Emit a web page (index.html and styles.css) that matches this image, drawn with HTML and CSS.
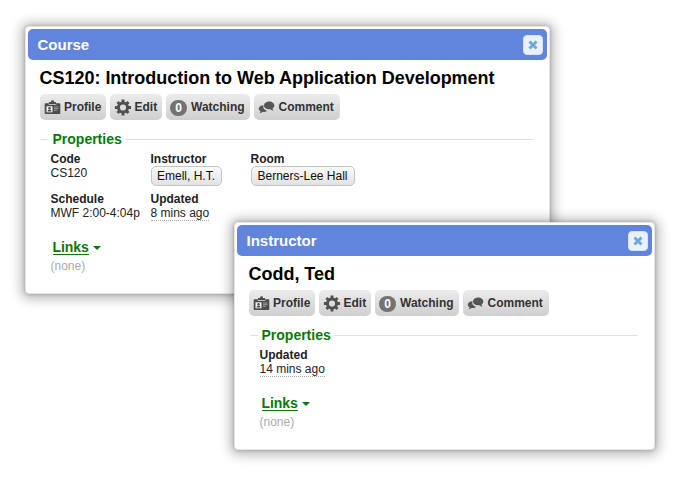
FILE: index.html
```html
<!DOCTYPE html>
<html lang="en">
<head>
<meta charset="utf-8">
<title>Course</title>
<link rel="stylesheet" href="styles.css">
</head>
<body>
<svg class="defs" width="0" height="0" aria-hidden="true">
  <symbol id="badge" viewBox="0 0 16 15">
    <path fill="#4c4c4c" fill-rule="evenodd" d="M1 3.2h3.6V2h2V1.200Q6.700.3 8 .3T9.400 1.200V2h2v1.200H15q.8 0 .8.800v9.200q0 .8-.8.800H1q-.8 0-.8-.8V4q0-.8.8-.8zM4.200 4.200V5h7.600v-.8z"/>
    <path fill="#f4f4f4" d="M2 6.300h6v6H2z"/>
    <circle cx="5" cy="8.200" r="1.200" fill="#4c4c4c"/>
    <path fill="#4c4c4c" d="M3 11.500q0-1.900 2-1.900t2 1.900z"/>
    <path stroke="#b0b0b0" stroke-width=".8" d="M9.400 7h4.600M9.400 8.700h4.600M9.400 10.300h3"/>
  </symbol>
  <symbol id="gear" viewBox="-8 -8 16 16">
    <path stroke="#505050" stroke-width="2.700" d="M0-7.600V-4M0 4v3.600M-7.600 0H-4M4 0h3.600M-5.200-5.200l2.400 2.400M2.800 2.800l2.400 2.400M-5.200 5.200l2.400-2.400M2.800-2.800l2.400-2.400"/>
    <circle r="4.300" fill="none" stroke="#505050" stroke-width="2.800"/>
  </symbol>
  <symbol id="talk" viewBox="0 0 16 13">
    <path fill="#555" d="M5 4.300C2.200 4.500.3 5.900.3 7.700c0 1.100.7 2 1.700 2.600 0 .8-.3 1.400-.9 2 1.200-.1 2.200-.6 2.900-1.300 1.900.2 3.700-.3 4.700-1.300C6 9.200 4.200 7.400 5 4.300z"/>
    <path fill="#555" d="M10.600.6c3 0 5.200 1.700 5.200 3.900 0 1.300-.7 2.300-1.800 3 .1.900.4 1.500 1 2.200-1.400-.1-2.400-.7-3.100-1.500-3.600.3-6.400-1.300-6.400-3.700 0-2.200 2.200-3.900 5.100-3.900z"/>
  </symbol>
  <symbol id="close" viewBox="0 0 10 10">
    <path d="M1.500 1.500l7 7M8.500 1.500L1.500 8.500" stroke="#6eaad8" stroke-width="3"/>
  </symbol>
</svg>

<section class="window course">
  <header class="bar"><span class="kind">Course</span><button class="close" aria-label="Close"><svg><use href="#close"/></svg></button></header>
  <h1 class="title">CS120: Introduction to Web Application Development</h1>
  <nav class="tools">
    <button class="tool profile"><svg class="i-badge"><use href="#badge"/></svg><span>Profile</span></button>
    <button class="tool edit"><svg class="i-gear"><use href="#gear"/></svg><span>Edit</span></button>
    <button class="tool watch"><b class="count">0</b><span>Watching</span></button>
    <button class="tool comment"><svg class="i-talk"><use href="#talk"/></svg><span>Comment</span></button>
  </nav>
  <h2 class="legend"><span>Properties</span></h2>
  <dl class="props">
    <div><dt>Code</dt><dd>CS120</dd></div>
    <div><dt>Instructor</dt><dd><button class="chip emell">Emell, H.T.</button></dd></div>
    <div><dt>Room</dt><dd><button class="chip hall">Berners-Lee Hall</button></dd></div>
    <div><dt>Schedule</dt><dd>MWF 2:00-4:04p</dd></div>
    <div><dt>Updated</dt><dd><span class="time">8 mins ago</span></dd></div>
  </dl>
  <h2 class="links"><span>Links</span><i class="caret"></i></h2>
  <p class="none">(none)</p>
</section>

<section class="window instructor">
  <header class="bar"><span class="kind">Instructor</span><button class="close" aria-label="Close"><svg><use href="#close"/></svg></button></header>
  <h1 class="title">Codd, Ted</h1>
  <nav class="tools">
    <button class="tool profile"><svg class="i-badge"><use href="#badge"/></svg><span>Profile</span></button>
    <button class="tool edit"><svg class="i-gear"><use href="#gear"/></svg><span>Edit</span></button>
    <button class="tool watch"><b class="count">0</b><span>Watching</span></button>
    <button class="tool comment"><svg class="i-talk"><use href="#talk"/></svg><span>Comment</span></button>
  </nav>
  <h2 class="legend"><span>Properties</span></h2>
  <dl class="props">
    <div><dt>Updated</dt><dd><span class="time">14 mins ago</span></dd></div>
  </dl>
  <h2 class="links"><span>Links</span><i class="caret"></i></h2>
  <p class="none">(none)</p>
</section>
</body>
</html>
```
FILE: styles.css
```css
* { box-sizing: border-box; margin: 0; padding: 0; }
body {
  width: 682px;
  height: 486px;
  position: relative;
  overflow: hidden;
  background: #fff;
  color: #222;
  font: 12px "Liberation Sans", Arial, sans-serif;
}
button { font: inherit; color: inherit; border: 0; white-space: nowrap; }
.defs { position: absolute; }

/* floating windows */
.window {
  position: absolute;
  background: #fff;
  border: 1px solid #e6e6e6;
  border-radius: 4px;
  padding: 2px;
  box-shadow: 0 0 3px 1px rgba(0,0,0,.14), 0 1px 12px 4px rgba(0,0,0,.27);
}
.course { left: 25px; top: 26px; width: 525px; height: 268px; }
.instructor { left: 234px; top: 222px; width: 421px; height: 228px; }

.bar {
  height: 31px;
  display: flex;
  align-items: center;
  justify-content: space-between;
  padding: 0 4px 0 9.5px;
  border-radius: 5px;
  background: #6184dc;
  color: #fff;
  font-size: 15px;
  font-weight: bold;
}
.close {
  width: 20px;
  height: 20px;
  border-radius: 4px;
  background: #e8f1fc;
  border: 1px solid #d3e2f8;
  display: flex;
  align-items: center;
  justify-content: center;
}
.close svg { width: 10px; height: 10px; }
.title {
  height: 34px;
  padding-left: 11.5px;
  font-size: 18px;
  line-height: 36px;
  letter-spacing: -.02px;
  color: #000;
  white-space: nowrap;
}
.tools { display: flex; gap: 4px; padding-left: 12px; }
.tool {
  height: 26px;
  display: flex;
  align-items: center;
  padding-left: 4px;
  border-radius: 5px;
  background: linear-gradient(#ececec, #cfcfcf);
  color: #333;
  font-weight: bold;
}
.profile { width: 66px; }
.edit { width: 52px; }
.watch { width: 84px; }
.comment { width: 86px; }
.tool svg { flex: none; margin-top: 1px; }
.i-badge { width: 17px; height: 15px; margin-right: 3px; }
.tool .i-gear { width: 18px; height: 17px; margin: 1px 2.5px 0 0; }
.i-talk { width: 17px; height: 13px; margin-right: 3.500px; }
.count {
  width: 17px;
  height: 16px;
  margin: 1px 4px 0 0;
  border-radius: 8px;
  background: #737373;
  color: #fff;
  line-height: 16px;
  text-align: center;
}
.legend {
  display: flex;
  align-items: center;
  height: 16px;
  margin: 11px 14px 5px 13px;
  font-size: 14px;
  color: #0a790a;
}
.legend::before, .legend::after { content: ""; height: 1px; background: #e2e2e2; }
.legend::before { width: 8px; }
.legend::after { flex: 1; }
.legend span { padding: 0 3px 0 3.500px; }
.props {
  display: grid;
  grid-template-columns: repeat(3, 100px);
  grid-auto-rows: 28px;
  row-gap: 12px;
  margin-left: 22.500px;
  line-height: 14px;
}
dt { font-weight: bold; }
dd { white-space: nowrap; }
.chip {
  display: block;
  height: 20px;
  border: 1px solid #c4c4c4;
  border-radius: 5px;
  background: linear-gradient(#fafafa, #e2e2e2);
  line-height: 18px;
  color: #111;
}
.emell { width: 71px; }
.hall { width: 104px; }
.time { display: inline-block; height: 15px; border-bottom: 1px dotted #aaa; }
.links {
  display: flex;
  align-items: center;
  height: 16px;
  margin: 19px 0 4px 24.5px;
  font-size: 14px;
  color: #0a790a;
}
.links span { height: 16px; line-height: 16px; letter-spacing: -.1px; border-bottom: 1px solid #0a790a; }
.caret {
  margin: 1px 0 0 4px;
  border: 4px solid transparent;
  border-top-color: #0a790a;
  border-bottom: 0;
}
.none { margin-left: 22.500px; line-height: 14px; color: #aaa; }
```
